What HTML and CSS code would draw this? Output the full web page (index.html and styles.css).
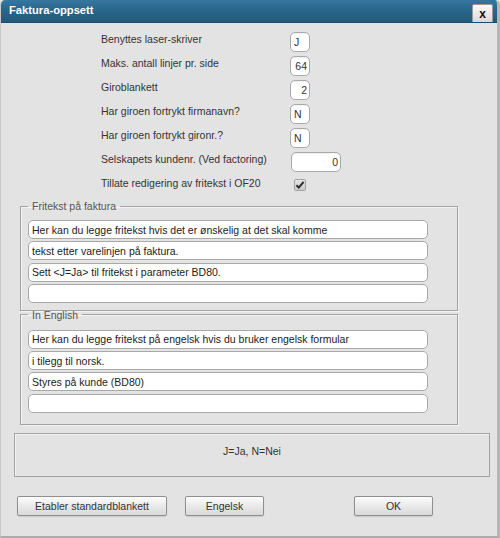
FILE: index.html
```html
<!DOCTYPE html>
<html lang="no">
<head>
<meta charset="utf-8">
<title>Faktura-oppsett</title>
<link rel="stylesheet" href="styles.css">
</head>
<body>
<div class="window">
  <div class="titlebar">
    <span class="title">Faktura-oppsett</span>
    <button class="close" type="button">x</button>
  </div>
  <div class="content">
    <div class="settings">
      <label class="label">Benyttes laser-skriver</label>
      <input class="field field-short" type="text" value="J">
      <label class="label">Maks. antall linjer pr. side</label>
      <input class="field field-short num" type="text" value="64">
      <label class="label">Giroblankett</label>
      <input class="field field-short num" type="text" value="2">
      <label class="label">Har giroen fortrykt firmanavn?</label>
      <input class="field field-short" type="text" value="N">
      <label class="label">Har giroen fortrykt gironr.?</label>
      <input class="field field-short" type="text" value="N">
      <label class="label">Selskapets kundenr. (Ved factoring)</label>
      <input class="field field-wide num" type="text" value="0">
      <label class="label">Tillate redigering av fritekst i OF20</label>
      <span class="checkbox"><svg width="10" height="10" viewBox="0 0 10 10"><path d="M1.5 5.2 L3.8 7.6 L8.6 1.8" fill="none" stroke="#2a2a2a" stroke-width="2"/></svg></span>
    </div>

    <fieldset class="group group-no">
      <legend>Fritekst på faktura</legend>
      <input class="line" type="text" value="Her kan du legge fritekst hvis det er ønskelig at det skal komme">
      <input class="line" type="text" value="tekst etter varelinjen på faktura.">
      <input class="line" type="text" value="Sett <J=Ja> til fritekst i parameter BD80.">
      <input class="line" type="text" value="">
    </fieldset>

    <fieldset class="group group-en">
      <legend>In English</legend>
      <input class="line" type="text" value="Her kan du legge fritekst på engelsk hvis du bruker engelsk formular">
      <input class="line" type="text" value="i tilegg til norsk.">
      <input class="line" type="text" value="Styres på kunde (BD80)">
      <input class="line" type="text" value="">
    </fieldset>

    <div class="info">J=Ja, N=Nei</div>

    <div class="buttons">
      <button class="btn btn-std" type="button">Etabler standardblankett</button>
      <button class="btn btn-eng" type="button">Engelsk</button>
      <button class="btn btn-ok" type="button">OK</button>
    </div>
  </div>
</div>
</body>
</html>
```

FILE: styles.css
```css
* { box-sizing: border-box; }

html, body {
  margin: 0;
  padding: 0;
  background: #e3e3e3;
}

body {
  font-family: "Liberation Sans", Arial, sans-serif;
  font-size: 10.5px;
  color: #333;
}

.window {
  width: 500px;
  height: 538px;
  background: #e3e3e3;
  border-left: 1px solid #c9c9c9;
  border-right: 3px solid #b6b6b6;
  border-bottom: 2px solid #ababab;
  border-radius: 5px 5px 0 0;
  overflow: hidden;
}

.titlebar {
  height: 23px;
  background: linear-gradient(#3777a0, #2a678c 40%, #215a7b);
  border-bottom: 1px solid #1b4d6a;
  display: flex;
  align-items: flex-start;
  justify-content: space-between;
  padding: 0 4px 0 8px;
}

.title {
  color: #fff;
  font-weight: bold;
  font-size: 11.2px;
  line-height: 21px;
}

.close {
  margin-top: 4px;
  width: 21px;
  height: 18px;
  padding: 0;
  border: 1px solid #9a9a9a;
  border-bottom: none;
  border-radius: 2px 2px 0 0;
  background: linear-gradient(#fafafa, #d9d9d9);
  font-family: "Liberation Sans", Arial, sans-serif;
  font-weight: bold;
  font-size: 12px;
  line-height: 18px;
  color: #111;
}

.settings {
  display: grid;
  grid-template-columns: 189px auto;
  grid-auto-rows: 20px;
  row-gap: 4px;
  padding: 9px 0 0 100px;
}

.label {
  line-height: 14px;
  align-self: start;
  white-space: nowrap;
}

.field {
  height: 20px;
  border: 1px solid #a9a9a9;
  border-radius: 5px;
  background: #fff;
  font-family: "Liberation Sans", Arial, sans-serif;
  font-size: 10.5px;
  color: #333;
  padding: 0 2px 0 3px;
  box-shadow: inset 0 1px 1px rgba(0,0,0,0.06);
}

.num { text-align: right; }

.field-short { width: 20px; }
.field-wide { width: 50px; margin-left: 1px; }

.checkbox {
  width: 12px;
  height: 12px;
  margin: 3px 0 0 4px;
  background: linear-gradient(#e6e6e6, #c8c8c8);
  border: 1px solid #a2a2a2;
  border-radius: 2px;
  display: flex;
  align-items: center;
  justify-content: center;
}

.group {
  width: 438px;
  margin: 4px 0 0 19px;
  border: 1px solid #a2a2a2;
  box-shadow: 1px 1px 0 #f4f4f4, inset 1px 1px 0 #f4f4f4;
  padding: 8px 0 7px 7px;
  display: flex;
  flex-direction: column;
  gap: 2.3px;
  min-width: 0;
}

.group legend {
  padding: 0 4px;
  line-height: 12px;
  color: #555;
  font-size: 10.5px;
}

.group-en {
  margin-top: -2px;
  padding-top: 9px;
  padding-bottom: 11px;
}

.line {
  width: 400px;
  height: 19px;
  border: 1px solid #a9a9a9;
  border-radius: 5px;
  background: #fff;
  font-family: "Liberation Sans", Arial, sans-serif;
  font-size: 10.5px;
  color: #222;
  padding: 0 3px;
}

.info {
  margin: 8px 0 0 13px;
  width: 476px;
  height: 44px;
  border: 1px solid #a2a2a2;
  box-shadow: inset 1px 1px 0 #f4f4f4;
  text-align: center;
  padding-top: 10px;
  line-height: 14px;
  color: #333;
}

.buttons {
  display: flex;
  margin-top: 19px;
  padding-left: 16px;
}

.btn {
  height: 20px;
  padding: 0;
  border: 1px solid #8f8f8f;
  border-radius: 2px;
  background: linear-gradient(#fbfbfb, #d9d9d9);
  box-shadow: 0 1px 1px rgba(0,0,0,0.12);
  font-family: "Liberation Sans", Arial, sans-serif;
  font-size: 10.5px;
  color: #333;
}

.btn-std { width: 150px; }
.btn-eng { width: 79px; margin-left: 18px; }
.btn-ok { width: 79px; margin-left: 90px; }
```
